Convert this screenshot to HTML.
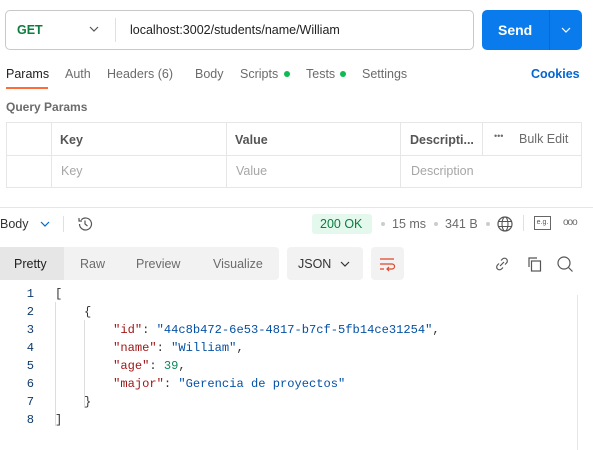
<!DOCTYPE html>
<html><head><meta charset="utf-8"><style>
*{margin:0;padding:0;box-sizing:border-box}
body{width:593px;height:450px;background:#fff;font-family:"Liberation Sans",sans-serif;font-size:12.5px;color:#212121;position:relative;overflow:hidden}
.a{position:absolute;white-space:nowrap}
.g{color:#6b6b6b}
.mono{font-family:"Liberation Mono",monospace;font-size:12.1px}
.k{color:#a31515}.s{color:#0451a5}.n{color:#098658}
</style></head><body>
<div class="a" style="left:5px;top:10px;width:469px;height:40px;border:1px solid #c8c8c8;border-radius:5px"></div>
<div class="a" style="left:17px;top:23px;font-weight:bold;color:#0f7b3f;font-size:12.5px">GET</div>
<svg class="a" style="left:89px;top:26px" width="10" height="7"><path d="M1 1l4 4 4-4" stroke="#555" fill="none" stroke-width="1.2"/></svg>
<div class="a" style="left:115px;top:18px;width:1px;height:24px;background:#e0e0e0"></div>
<div class="a" style="left:130px;top:23px;color:#212121">localhost:3002/students/name/William</div>
<div class="a" style="left:482px;top:10px;width:100px;height:40px;background:#097bed;border-radius:5px"></div>
<div class="a" style="left:549px;top:10px;width:1px;height:40px;background:#0a68c7"></div>
<div class="a" style="left:498px;top:22px;color:#fff;font-weight:bold;font-size:14px">Send</div>
<svg class="a" style="left:561px;top:27px" width="10" height="7"><path d="M1 1l4 4 4-4" stroke="#fff" fill="none" stroke-width="1.2"/></svg>

<div class="a" style="left:6px;top:67px">Params</div>
<div class="a" style="left:6px;top:87px;width:42px;height:2px;background:#ff6c37"></div>
<div class="a g" style="left:65px;top:67px">Auth</div>
<div class="a g" style="left:107px;top:67px">Headers <span style="color:#6b6b6b">(6)</span></div>
<div class="a g" style="left:195px;top:67px">Body</div>
<div class="a g" style="left:240px;top:67px">Scripts</div>
<div class="a" style="left:284px;top:71px;width:6px;height:6px;border-radius:3px;background:#0cbb52"></div>
<div class="a g" style="left:306px;top:67px">Tests</div>
<div class="a" style="left:340px;top:71px;width:6px;height:6px;border-radius:3px;background:#0cbb52"></div>
<div class="a g" style="left:362px;top:67px">Settings</div>
<div class="a" style="left:531px;top:67px;color:#0265d2;font-weight:bold">Cookies</div>

<div class="a" style="left:6px;top:100px;font-weight:bold;color:#6b6b6b;font-size:12px">Query Params</div>
<div class="a" style="left:6px;top:122px;width:576px;height:66px;border:1px solid #e6e6e6"></div>
<div class="a" style="left:6px;top:155px;width:576px;height:1px;background:#e6e6e6"></div>
<div class="a" style="left:51px;top:122px;width:1px;height:66px;background:#e6e6e6"></div>
<div class="a" style="left:226px;top:122px;width:1px;height:66px;background:#e6e6e6"></div>
<div class="a" style="left:400px;top:122px;width:1px;height:66px;background:#e6e6e6"></div>
<div class="a" style="left:482px;top:122px;width:1px;height:33px;background:#e6e6e6"></div>
<div class="a" style="left:60px;top:133px;font-weight:bold;color:#555">Key</div>
<div class="a" style="left:235px;top:133px;font-weight:bold;color:#555">Value</div>
<div class="a" style="left:410px;top:133px;font-weight:bold;color:#555">Descripti...</div>
<div class="a g" style="left:494px;top:131px;font-size:9px">•••</div>
<div class="a g" style="left:519px;top:132px">Bulk Edit</div>
<div class="a" style="left:61px;top:164px;color:#a6a6a6">Key</div>
<div class="a" style="left:236px;top:164px;color:#a6a6a6">Value</div>
<div class="a" style="left:411px;top:164px;color:#a6a6a6">Description</div>

<div class="a" style="left:0;top:207px;width:593px;height:1px;background:#e6e6e6"></div>
<div class="a" style="left:0;top:217px;color:#333">Body</div>
<svg class="a" style="left:40px;top:221px" width="10" height="7"><path d="M1 1l4 4 4-4" stroke="#0265d2" fill="none" stroke-width="1.2"/></svg>
<div class="a" style="left:63px;top:216px;width:1px;height:16px;background:#e0e0e0"></div>
<svg class="a" style="left:76px;top:215px" width="18" height="18"><path d="M3.5 9a6 6 0 1 0 1.8-4.3M3 3v3h3M9 5.5V9l2.5 2" stroke="#555" fill="none" stroke-width="1.2"/></svg>
<div class="a" style="left:312px;top:214px;width:60px;height:20px;background:#e5f8ed;border-radius:3px"></div>
<div class="a" style="left:320px;top:217px;color:#0a7d3f">200 OK</div>
<div class="a" style="left:381px;top:222px;width:4px;height:4px;border-radius:2px;background:#ccc"></div>
<div class="a g" style="left:392px;top:217px">15 ms</div>
<div class="a" style="left:434px;top:222px;width:4px;height:4px;border-radius:2px;background:#ccc"></div>
<div class="a g" style="left:445px;top:217px">341 B</div>
<div class="a" style="left:486px;top:222px;width:4px;height:4px;border-radius:2px;background:#ccc"></div>
<svg class="a" style="left:496px;top:215px" width="18" height="18"><circle cx="9" cy="9" r="7" stroke="#555" fill="none" stroke-width="1.2"/><ellipse cx="9" cy="9" rx="3" ry="7" stroke="#555" fill="none" stroke-width="1.1"/><path d="M2 6.5h14M2 11.5h14" stroke="#555" stroke-width="1.1"/></svg>
<div class="a" style="left:523px;top:215px;width:1px;height:16px;background:#e0e0e0"></div>
<div class="a" style="left:534px;top:216px;width:17px;height:14px;border:1px solid #666;font-size:7px;color:#555;text-align:center;line-height:12px">e.g.</div>
<div class="a g" style="left:563px;top:217px;font-size:10px;letter-spacing:-1px">ooo</div>

<div class="a" style="left:0;top:247px;width:279px;height:33px;background:#f2f2f2;border-radius:0 4px 4px 0"></div>
<div class="a" style="left:0;top:247px;width:64px;height:33px;background:#e6e6e6"></div>
<div class="a" style="left:14px;top:257px">Pretty</div>
<div class="a g" style="left:80px;top:257px">Raw</div>
<div class="a g" style="left:136px;top:257px">Preview</div>
<div class="a g" style="left:213px;top:257px">Visualize</div>
<div class="a" style="left:287px;top:247px;width:76px;height:33px;background:#f2f2f2;border-radius:4px"></div>
<div class="a" style="left:298px;top:257px;color:#333">JSON</div>
<svg class="a" style="left:340px;top:261px" width="10" height="7"><path d="M1 1l4 4 4-4" stroke="#333" fill="none" stroke-width="1.2"/></svg>
<div class="a" style="left:371px;top:247px;width:33px;height:33px;background:#f2f2f2;border-radius:4px"></div>
<svg class="a" style="left:378px;top:255px" width="18" height="18"><path d="M2 4h14M2 9h12a2.5 2.5 0 0 1 0 5H9M11 12l-2 2 2 2M2 14h4" stroke="#e0462a" fill="none" stroke-width="1.2"/></svg>
<svg class="a" style="left:494px;top:256px" width="16" height="16"><path d="M6 10l4-4M7 4.5l1.5-1.5a2.8 2.8 0 0 1 4 4L11 8.5M9 11.5L7.5 13a2.8 2.8 0 0 1-4-4L5 7.5" stroke="#555" fill="none" stroke-width="1.2"/></svg>
<svg class="a" style="left:525px;top:255px" width="18" height="18"><path d="M4 12V3h8" stroke="#555" fill="none" stroke-width="1.2"/><rect x="6.5" y="6" width="9" height="10" stroke="#555" fill="none" stroke-width="1.2"/></svg>
<svg class="a" style="left:556px;top:255px" width="18" height="18"><circle cx="8" cy="8" r="6" stroke="#555" fill="none" stroke-width="1.2"/><path d="M12.5 12.5l4 4" stroke="#555" stroke-width="1.2"/></svg>

<div class="a" style="left:577px;top:295px;width:1px;height:155px;background:#e6e6e6"></div>
<div class="a" style="left:55px;top:302px;width:1px;height:124px;background:#ddd"></div>
<div class="a" style="left:84px;top:320px;width:1px;height:88px;background:#ddd"></div>
<div class="mono" style="position:absolute;left:0;top:285px;line-height:18px">
<div style="position:absolute;left:22px;width:12px;text-align:right;color:#0e3a6e">1<br>2<br>3<br>4<br>5<br>6<br>7<br>8</div>
<div style="position:absolute;left:55px;color:#333;white-space:pre">[
    {
        <span class="k">"id"</span>: <span class="s">"44c8b472-6e53-4817-b7cf-5fb14ce31254"</span>,
        <span class="k">"name"</span>: <span class="s">"William"</span>,
        <span class="k">"age"</span>: <span class="n">39</span>,
        <span class="k">"major"</span>: <span class="s">"Gerencia de proyectos"</span>
    }
]</div>
</div>
</body></html>
